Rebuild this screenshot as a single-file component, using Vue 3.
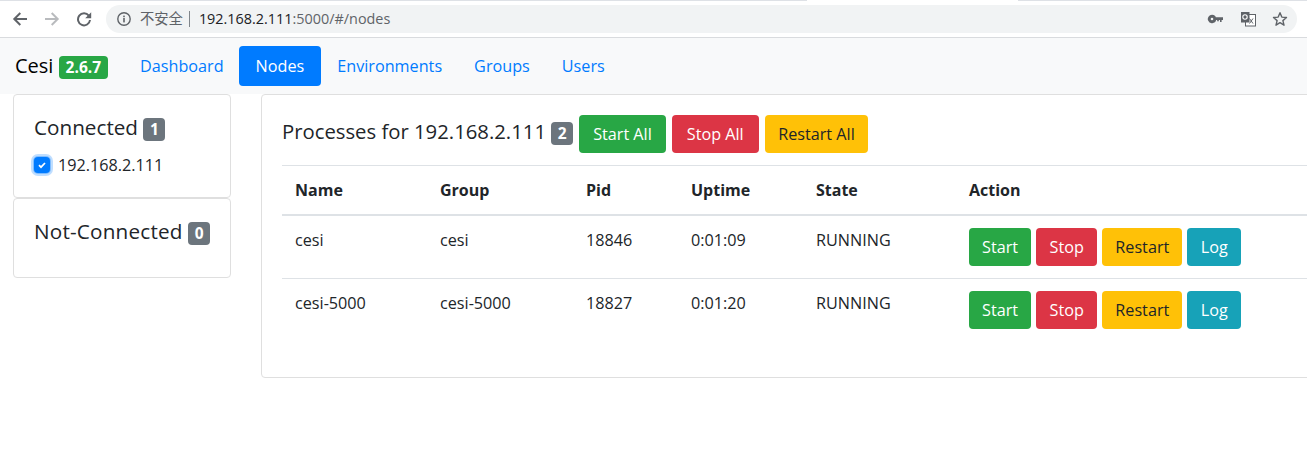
<script setup>
const procs = [
  { name: 'cesi', group: 'cesi', pid: '18846', uptime: '0:01:09', state: 'RUNNING' },
  { name: 'cesi-5000', group: 'cesi-5000', pid: '18827', uptime: '0:01:20', state: 'RUNNING' },
]
const links = ['Dashboard', 'Nodes', 'Environments', 'Groups', 'Users']
</script>

<template>
  <div class="page">
    <header class="chrome">
      <button class="nav-icon" aria-label="Back">
        <svg width="16" height="16" viewBox="0 0 16 16"><path d="M15 8H2.500M8.300 2L2.300 8l6 6" fill="none" stroke="#5f6368" stroke-width="2"/></svg>
      </button>
      <button class="nav-icon" aria-label="Forward">
        <svg width="16" height="16" viewBox="0 0 16 16"><path d="M1 8h12.500M7.700 2l6 6-6 6" fill="none" stroke="#b9bbbe" stroke-width="2"/></svg>
      </button>
      <button class="nav-icon" aria-label="Reload">
        <svg width="16" height="16" viewBox="0 0 16 16"><path d="M12.800 4.700A6 6 0 1 0 14 9" fill="none" stroke="#5f6368" stroke-width="2"/><path d="M15.200 1.300v6h-6z" fill="#5f6368"/></svg>
      </button>
      <div class="omnibox">
        <svg class="info" width="16" height="16" viewBox="0 0 16 16"><circle cx="8" cy="8" r="6.200" fill="none" stroke="#5f6368" stroke-width="1.400"/><rect x="7.200" y="7" width="1.600" height="4.400" fill="#5f6368"/><rect x="7.200" y="4.600" width="1.600" height="1.600" fill="#5f6368"/></svg>
        <span class="insecure">不安全</span>
        <span class="sep"></span>
        <span class="url"><span class="host">192.168.2.111</span>:5000/#/nodes</span>
        <span class="omni-actions">
          <svg class="key" width="18" height="16" viewBox="0 0 18 16"><path d="M5 3.800a4.200 4.200 0 1 1-3.900 5.800A4.200 4.200 0 0 1 5 3.800zM5 6.700a1.300 1.300 0 1 0 0 2.600 1.300 1.300 0 0 0 0-2.600z" fill="#5f6368" fill-rule="evenodd"/><path d="M8.500 6.300H16v2.800h-1.400v1.800h-1.600V9.100h-1.200v1.200h-1.600V9.100H8.500z" fill="#5f6368"/></svg>
          <svg width="16" height="16" viewBox="0 0 16 16"><rect x="5.500" y="3.500" width="10" height="11.500" fill="#fff" stroke="#5f6368"/><path d="M1 1h8.500v10.500H1z" fill="#5f6368"/><circle cx="5" cy="6" r="2.200" fill="none" stroke="#fff" stroke-width="1.100"/><path d="M9.500 7.500l3.500 5M13 7.500l-3.500 5" stroke="#5f6368" fill="none"/></svg>
          <svg width="16" height="16" viewBox="0 0 16 16"><path d="M8 1.700l1.800 4.400 4.700.4-3.600 3.100 1.100 4.600L8 11.700l-4 2.500 1.100-4.600-3.600-3.100 4.700-.4z" fill="none" stroke="#5f6368" stroke-width="1.400" stroke-linejoin="round"/></svg>
        </span>
      </div>
    </header>

    <nav class="navbar">
      <span class="brand">Cesi <span class="badge green">2.6.7</span></span>
      <a v-for="l in links" :key="l" class="nav-link" :class="{ active: l === 'Nodes' }">{{ l }}</a>
    </nav>

    <main class="content">
      <aside class="side">
        <section class="card side-card first">
          <h5>Connected <span class="badge gray">1</span></h5>
          <label class="check">
            <span class="box">
              <svg width="8" height="8" viewBox="0 0 8 8"><path d="M1 4.200l2 2 4-4.200" fill="none" stroke="#fff" stroke-width="1.700"/></svg>
            </span>
            192.168.2.111
          </label>
        </section>
        <section class="card side-card second">
          <h5 class="wide">Not-Connected <span class="badge gray">0</span></h5>
        </section>
      </aside>

      <section class="card procs">
        <div class="title">
          <h5>Processes for 192.168.2.111 <span class="badge gray">2</span></h5>
          <button class="btn big green">Start All</button>
          <button class="btn big red">Stop All</button>
          <button class="btn big yellow">Restart All</button>
        </div>
        <table>
          <colgroup>
            <col class="c1" /><col class="c2" /><col class="c3" /><col class="c4" /><col class="c5" /><col class="c6" />
          </colgroup>
          <thead>
            <tr><th>Name</th><th>Group</th><th>Pid</th><th>Uptime</th><th>State</th><th>Action</th></tr>
          </thead>
          <tbody>
            <tr v-for="p in procs" :key="p.name">
              <td>{{ p.name }}</td>
              <td>{{ p.group }}</td>
              <td>{{ p.pid }}</td>
              <td>{{ p.uptime }}</td>
              <td>{{ p.state }}</td>
              <td class="actions">
                <button class="btn green">Start</button>
                <button class="btn red">Stop</button>
                <button class="btn yellow">Restart</button>
                <button class="btn teal">Log</button>
              </td>
            </tr>
          </tbody>
        </table>
      </section>
    </main>
  </div>
</template>

<style>
html, body { margin: 0; background: #fff; overflow: hidden; }
</style>

<style scoped>
.page {
  width: 1307px;
  height: 466px;
  overflow: hidden;
  font-family: "Open Sans", "Noto Sans CJK SC", sans-serif;
  font-size: 16.2px;
  line-height: 24px;
  color: #212529;
}
.chrome {
  background: linear-gradient(to right, #dee1e6 807px, #fff 807px, #fff 1018px, #dee1e6 1018px) top / 100% 1px no-repeat #fff;
  border-bottom: 1px solid #d9dbde;
  display: flex;
  align-items: center;
  padding: 1px 10px 0 12px;
  box-sizing: border-box;
  height: 38px;
}
.nav-icon {
  width: 32px;
  height: 28px;
  border: 0;
  padding: 0;
  background: none;
  display: flex;
  align-items: center;
  justify-content: flex-start;
}
.omnibox {
  flex: 1;
  height: 28px;
  margin-left: -2px;
  background: #f1f3f4;
  border-radius: 14px;
  display: flex;
  align-items: center;
  padding: 0 9px 0 10px;
  font-size: 14.400px;
  color: #5f6368;
}
.info { margin-right: 8px; }
.insecure { font-size: 14.300px; }
.sep { width: 1px; height: 16px; background: #80868b; margin: 0 9px 0 6px; }
.host { color: #202124; }
.omni-actions { margin-left: auto; display: flex; align-items: center; gap: 16px; }
.key { margin-right: -1px; }
.navbar {
  height: 56px;
  background: #f8f9fa;
  display: flex;
  align-items: center;
  padding: 0 16px 0 15px;
}
.brand { font-size: 20px; color: #000; margin-right: 16px; white-space: nowrap; }
.nav-link {
  padding: 8px 16px;
  height: 24px;
  color: #007bff;
  border-radius: 4px;
}
.nav-link.active { background: #007bff; color: #fff; margin-left: -1px; padding: 8px 17px; }
.badge {
  display: inline-block;
  padding: 3px 6.500px;
  font-size: 15.500px;
  line-height: 17px;
  font-weight: 700;
  border-radius: 4px;
  color: #fff;
}
.badge.green { background: #28a745; padding: 3px 7px; }
.badge.gray { background: #6c757d; }
.content {
  display: flex;
  align-items: flex-start;
  gap: 30px;
  padding-left: 13px;
}
.card {
  background: #fff;
  border: 1px solid #dfdfdf;
  border-radius: 4px;
  box-sizing: border-box;
}
.side { width: 218px; flex: none; }
.side-card { padding: 20px; }
.first { height: 104px; }
.second { height: 80px; }
h5 { margin: 0; font-size: 20.700px; font-weight: 400; line-height: 24px; white-space: nowrap; }
h5.wide { letter-spacing: .2px; }
.check { display: flex; align-items: center; gap: 8px; margin-top: 12px; }
.box {
  width: 16px;
  height: 16px;
  border-radius: 4px;
  background: #007bff;
  box-shadow: 0 0 0 1px #80bdff, 0 0 0 3px rgba(0, 123, 255, .25);
  display: flex;
  align-items: center;
  justify-content: center;
}
.procs {
  flex: none;
  width: 1100px;
  height: 284px;
  padding: 20px;
}
.title { display: flex; align-items: center; gap: 6px; height: 38px; margin-bottom: 12px; }
.title h5 { font-size: 20.300px; padding-bottom: 5px; }
.btn {
  height: 38px;
  border: 0;
  border-radius: 4px;
  padding: 0 13px;
  font: inherit;
  color: #fff;
}
.btn.red { padding: 0 13.500px; }
.btn.teal { padding: 0 13.500px; }
.btn.big { padding: 0 14px; }
.btn.big.red { padding: 0 15px; }
.btn.big.yellow { padding: 0 13.500px; }
.btn.green { background: #28a745; }
.btn.red { background: #dc3545; }
.btn.yellow { background: #ffc107; color: #212529; }
.btn.teal { background: #17a2b8; }
table { border-collapse: collapse; table-layout: fixed; width: 1060px; }
.c1 { width: 145px; } .c2 { width: 146px; } .c3 { width: 105px; } .c4 { width: 125px; } .c5 { width: 153px; }
th, td { text-align: left; padding: 12px 13px; border-top: 1px solid #dee2e6; vertical-align: top; font-weight: 400; white-space: nowrap; }
th { font-weight: 700; font-size: 16px; border-bottom: 2px solid #dee2e6; }
.actions .btn + .btn { margin-left: 5px; }
</style>
